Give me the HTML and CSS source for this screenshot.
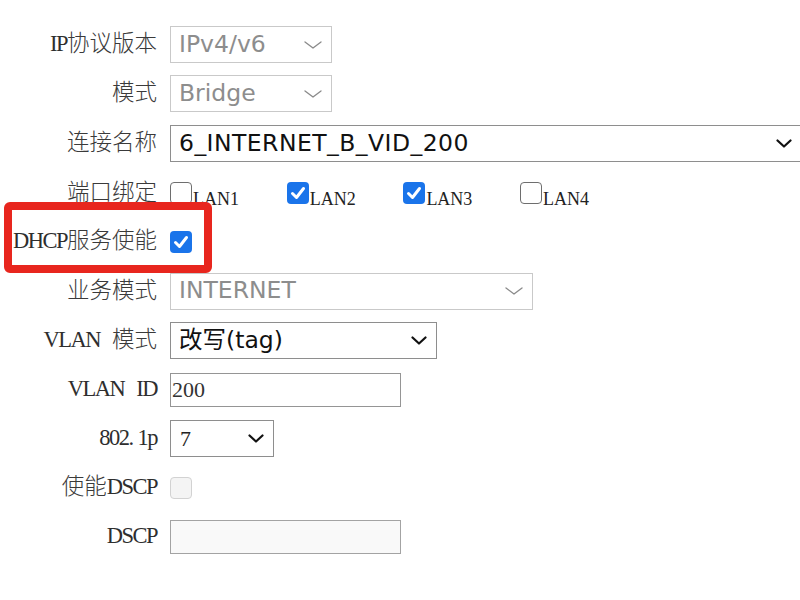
FILE: index.html
```html
<!DOCTYPE html>
<html lang="zh-CN">
<head>
<meta charset="utf-8">
<title>WAN 配置</title>
<link rel="stylesheet" href="styles.css">
</head>
<body>
<form class="form">
  <div class="lbl"><span class="lat">IP</span>协议版本</div>
  <div class="sel dis w-sm"><span class="val">IPv4/v6</span><svg class="arrow thin" viewBox="0 0 18 8" width="18" height="8"><path d="M1 1 L9 7 L17 1"/></svg></div>

  <div class="lbl">模式</div>
  <div class="sel dis w-sm"><span class="val">Bridge</span><svg class="arrow thin" viewBox="0 0 18 8" width="18" height="8"><path d="M1 1 L9 7 L17 1"/></svg></div>

  <div class="lbl">连接名称</div>
  <div class="sel w-full"><span class="val wide">6_INTERNET_B_VID_200</span><svg class="arrow bold" viewBox="0 0 16 9" width="16" height="9"><path d="M1.5 1.5 L8 7.5 L14.5 1.5"/></svg></div>

  <div class="lbl">端口绑定</div>
  <div class="ports">
    <label class="lan"><span class="cb"></span><span class="lan-t">LAN1</span></label>
    <label class="lan"><span class="cb on"><svg viewBox="0 0 22 22" width="22" height="22"><path d="M5.5 11.5 L9.5 15.5 L16.5 6.5"/></svg></span><span class="lan-t">LAN2</span></label>
    <label class="lan"><span class="cb on"><svg viewBox="0 0 22 22" width="22" height="22"><path d="M5.5 11.5 L9.5 15.5 L16.5 6.5"/></svg></span><span class="lan-t">LAN3</span></label>
    <label class="lan"><span class="cb"></span><span class="lan-t">LAN4</span></label>
  </div>

  <div class="lbl"><span class="lat">DHCP</span>服务使能</div>
  <div class="field"><span class="cb on"><svg viewBox="0 0 22 22" width="22" height="22"><path d="M5.5 11.5 L9.5 15.5 L16.5 6.5"/></svg></span></div>

  <div class="lbl">业务模式</div>
  <div class="sel dis w-md"><span class="val">INTERNET</span><svg class="arrow thin" viewBox="0 0 18 8" width="18" height="8"><path d="M1 1 L9 7 L17 1"/></svg></div>

  <div class="lbl"><span class="lat">VLAN</span><span class="gap"></span>模式</div>
  <div class="sel w-vm"><span class="val">改写(tag)</span><svg class="arrow bold" viewBox="0 0 16 9" width="16" height="9"><path d="M1.5 1.5 L8 7.5 L14.5 1.5"/></svg></div>

  <div class="lbl"><span class="lat">VLAN</span><span class="gap"></span><span class="lat">ID</span></div>
  <div class="field"><input class="inp" type="text" value="200"></div>

  <div class="lbl"><span class="lat">802.<span class="gap-s"></span>1p</span></div>
  <div class="sel serif w-xs"><span class="val">7</span><svg class="arrow bold" viewBox="0 0 16 9" width="16" height="9"><path d="M1.5 1.5 L8 7.5 L14.5 1.5"/></svg></div>

  <div class="lbl">使能<span class="lat">DSCP</span></div>
  <div class="field"><span class="cb dis"></span></div>

  <div class="lbl"><span class="lat">DSCP</span></div>
  <div class="field"><input class="inp off" type="text" value="" disabled></div>

  <div class="annot"></div>
</form>
</body>
</html>
```

FILE: styles.css
```css
html, body {
  margin: 0;
  padding: 0;
  background: #ffffff;
  overflow: hidden;
}

.form {
  position: relative;
  display: grid;
  grid-template-columns: 157px 1fr;
  grid-template-rows: 49px 49px 51px 48px 49px 50px repeat(5, 49px);
  column-gap: 13px;
  align-items: center;
  padding-top: 20px;
  margin: 0;
}

.lbl {
  text-align: right;
  white-space: nowrap;
  font-family: "Liberation Serif", "Noto Sans CJK SC", serif;
  font-size: 22.5px;
  font-weight: 300;
  color: #3a3a3a;
  line-height: 1;
}

.lat {
  font-family: "Liberation Serif", serif;
  font-weight: 400;
  font-size: 22.5px;
  letter-spacing: -1.5px;
  color: #2e2e2e;
}

.gap {
  display: inline-block;
  width: 12px;
}

.gap-s {
  display: inline-block;
  width: 5px;
}

.field {
  display: flex;
  align-items: center;
}

/* select boxes */
.sel {
  display: flex;
  align-items: center;
  justify-content: space-between;
  box-sizing: border-box;
  height: 37px;
  border: 1px solid #8e8e8e;
  background: #ffffff;
  padding: 0 9px 0 8px;
  font-family: "DejaVu Sans", "Noto Sans CJK SC", sans-serif;
  font-size: 23.5px;
  color: #111111;
  white-space: nowrap;
}

.sel .val {
  line-height: 1;
}

.sel .val.wide {
  letter-spacing: 0.45px;
}

.sel.dis {
  border-color: #c9c9c9;
  color: #8d8d8d;
}

.sel.serif {
  font-family: "Liberation Serif", serif;
  font-size: 22px;
  color: #222222;
}

.w-sm { width: 162px; }
.w-full { width: 632px; }
.w-md { width: 363px; }
.w-vm { width: 267px; }
.w-xs { width: 104px; padding-left: 9px; }

.arrow {
  flex: none;
  fill: none;
  stroke-linecap: round;
  stroke-linejoin: round;
}

.arrow.thin {
  stroke: #8a8a8a;
  stroke-width: 1.3;
}

.arrow.bold {
  stroke: #111111;
  stroke-width: 2.2;
}

/* checkboxes */
.cb {
  display: inline-flex;
  flex: none;
  box-sizing: border-box;
  width: 22px;
  height: 22px;
  border: 1.5px solid #6e6e6e;
  border-radius: 4px;
  background: #ffffff;
}

.cb.on {
  border: none;
  background: #1a74ea;
}

.cb.on svg {
  fill: none;
  stroke: #ffffff;
  stroke-width: 3;
  stroke-linecap: round;
  stroke-linejoin: round;
}

.cb.dis {
  border-color: #d2d2d2;
  background: #f4f4f4;
}

.ports {
  display: flex;
  align-items: center;
}

.lan {
  display: flex;
  align-items: flex-end;
  width: 116.7px;
}

.lan-t {
  font-family: "Liberation Serif", serif;
  font-size: 18px;
  line-height: 18px;
  color: #222222;
  margin-left: 1px;
  margin-bottom: -4px;
}

/* text inputs */
.inp {
  box-sizing: border-box;
  width: 231px;
  height: 34px;
  border: 1px solid #959595;
  border-radius: 0;
  padding: 0 1px;
  margin: 0;
  font-family: "Liberation Serif", serif;
  font-size: 22px;
  color: #333333;
  background: #ffffff;
  outline: none;
}

.inp.off {
  border-color: #a3a3a3;
  background: #f9f9f9;
}

/* red annotation frame */
.annot {
  position: absolute;
  left: 4px;
  top: 202px;
  width: 208px;
  height: 71px;
  box-sizing: border-box;
  border: 8px solid #e8261e;
  border-radius: 6px;
  pointer-events: none;
}
```
